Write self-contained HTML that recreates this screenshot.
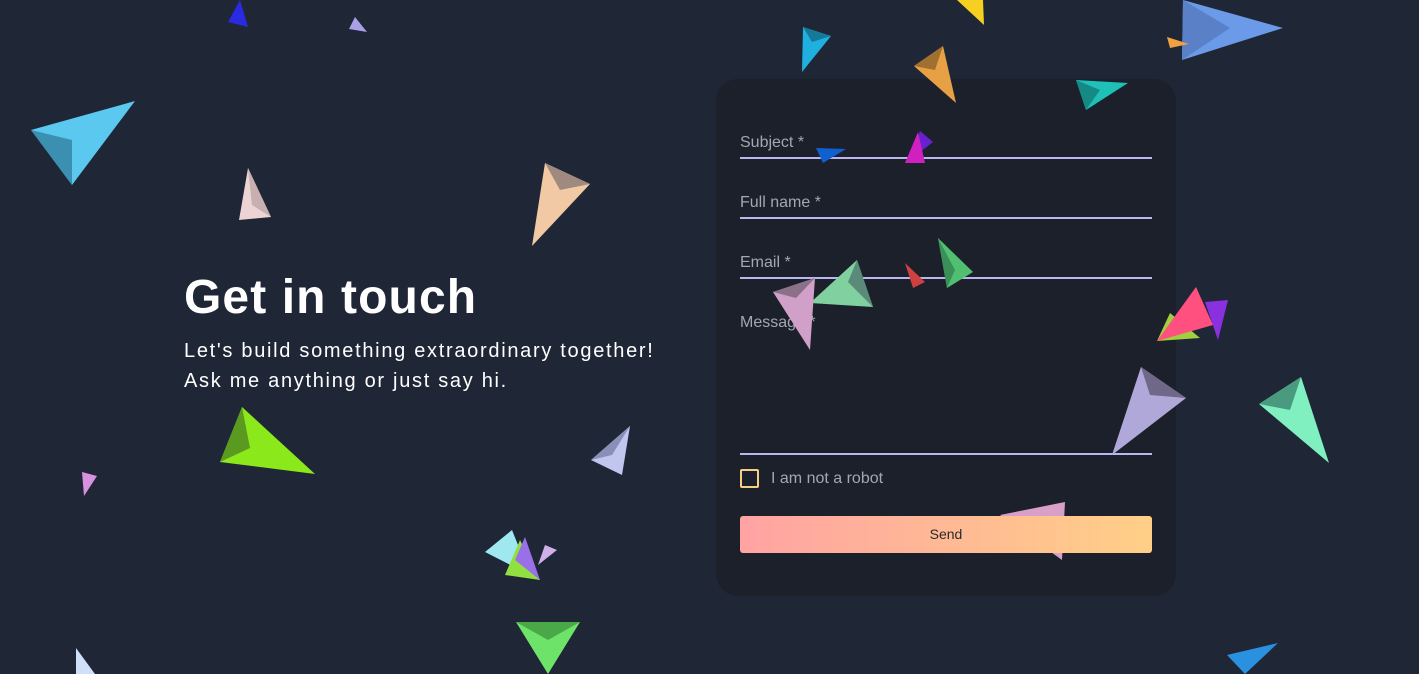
<!DOCTYPE html>
<html><head><meta charset="utf-8"><style>
*{margin:0;padding:0;box-sizing:border-box}
html,body{width:1419px;height:674px;overflow:hidden;background:#1f2636;font-family:"Liberation Sans",Roboto,sans-serif}
.card{position:absolute;left:716px;top:79px;width:460px;height:517px;background:#1b202b;border-radius:22px;z-index:1}
.f{position:absolute;left:740px;width:412px;border-bottom:2px solid #b9b6f0;color:#a3a7b2;font-size:16px;z-index:1;padding-top:2px}
h1{position:absolute;left:184px;top:270px;color:#fff;font-size:48px;font-weight:bold;letter-spacing:1.1px;z-index:1}
.sub{position:absolute;left:184px;top:336px;color:#fff;font-size:20px;line-height:30px;letter-spacing:1.7px;z-index:1}
svg{position:absolute;left:0;top:0;z-index:2}
.cb{position:absolute;left:740px;top:469px;width:19px;height:19px;border:2px solid #f6cf86;border-radius:2px;z-index:3}
.cbl{position:absolute;left:771px;top:470px;color:#a3a7b2;font-size:16px;z-index:3}
.btn{position:absolute;left:740px;top:516px;width:412px;height:37px;border-radius:3px;background:linear-gradient(90deg,#ffa3a3,#ffcf87);color:#2a2a2a;font-size:14px;text-align:center;line-height:37px;z-index:4}
</style></head><body>
<div class="card"></div>
<div class="f" style="top:132px;height:27px">Subject *</div>
<div class="f" style="top:192px;height:27px">Full name *</div>
<div class="f" style="top:252px;height:27px">Email *</div>
<div class="f" style="top:312px;height:143px">Message *</div>
<h1>Get in touch</h1>
<div class="sub">Let's build something extraordinary together!<br>Ask me anything or just say hi.</div>
<svg width="1419" height="674">
<polygon points="240,0 248,27 228,22" fill="#2a2ae0"/>
<polygon points="355,17 367,32 349,29" fill="#a9a0e8"/>
<polygon points="31,130 135,101 72,185" fill="#5ac8ef"/><polygon points="31,130 72,140 72,185" fill="#3b8fb0"/>
<polygon points="248,168 271,217 239,220" fill="#ecd4d4"/><polygon points="248,168 252,205 271,217" fill="#c8b0b0"/>
<polygon points="545,163 590,184 532,246" fill="#f2c9a5"/><polygon points="545,163 590,184 560,190" fill="#a08a80"/>
<polygon points="242,407 315,474 220,462" fill="#8be81a"/><polygon points="242,407 220,462 250,448" fill="#5a9a20"/>
<polygon points="82,472 97,476 84,496" fill="#d890e0"/>
<polygon points="630,426 622,475 591,460" fill="#c0c6ee"/><polygon points="630,426 591,460 612,455" fill="#8890b8"/>
<polygon points="512,530 530,575 485,552" fill="#a0e8f0"/><polygon points="520,540 540,580 505,575" fill="#90e040"/><polygon points="525,537 540,580 515,560" fill="#9a70e8"/><polygon points="545,545 557,550 538,565" fill="#d0b0e8"/>
<polygon points="516,622 580,622 548,674" fill="#6ee36a"/><polygon points="516,622 580,622 548,640" fill="#4aa848"/>
<polygon points="76,648 95,674 76,674" fill="#d0e0f8"/>
<polygon points="803,27 831,36 802,72" fill="#1fb0e0"/><polygon points="803,27 831,36 812,42" fill="#157a9a"/>
<polygon points="943,46 956,103 914,66" fill="#e8a045"/><polygon points="943,46 914,66 935,70" fill="#a07030"/>
<polygon points="957,0 983,0 984,25" fill="#f5d020"/>
<polygon points="1076,80 1128,83 1086,110" fill="#1fc0b8"/><polygon points="1076,80 1100,90 1086,110" fill="#158a85"/>
<polygon points="1183,0 1283,28 1182,60" fill="#6a9ae8"/><polygon points="1183,0 1230,28 1182,60" fill="#5a80c8"/>
<polygon points="1167,37 1189,44 1170,48" fill="#f0a040"/>
<polygon points="816,148 846,149 823,163" fill="#1060d0"/>
<polygon points="920,131 933,142 910,160" fill="#6a20d0"/><polygon points="918,132 925,163 905,163" fill="#d020c0"/>
<polygon points="857,260 873,307 810,303" fill="#80d0a0"/><polygon points="857,260 873,307 848,282" fill="#5a8a78"/>
<polygon points="773,292 815,278 810,350" fill="#d0a0c8"/><polygon points="773,292 815,278 796,298" fill="#8a7088"/>
<polygon points="905,263 925,282 913,288" fill="#d04040"/>
<polygon points="938,238 973,272 947,288" fill="#50c070"/><polygon points="938,238 947,288 955,270" fill="#3a9058"/>
<polygon points="1170,313 1200,338 1157,341" fill="#a0d040"/>
<polygon points="1196,287 1213,325 1157,341" fill="#ff5080"/>
<polygon points="1205,302 1228,300 1218,340" fill="#8a30e0"/>
<polygon points="1141,367 1186,398 1112,455" fill="#b0a8d8"/><polygon points="1141,367 1186,398 1150,395" fill="#706888"/>
<polygon points="1301,377 1329,463 1259,404" fill="#80f0c0"/><polygon points="1301,377 1259,404 1290,410" fill="#4a9a80"/>
<polygon points="1065,502 1062,560 1000,515" fill="#d8a0c8"/>
<polygon points="1227,655 1278,643 1245,674" fill="#2a90e0"/>
</svg>
<div class="cb"></div><div class="cbl">I am not a robot</div>
<div class="btn">Send</div>
</body></html>
